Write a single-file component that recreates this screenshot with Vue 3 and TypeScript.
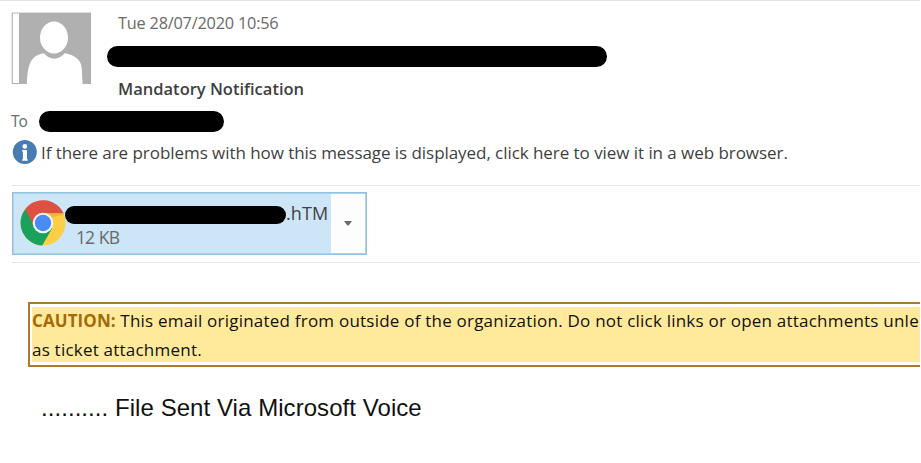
<script setup lang="ts">
const message = {
  sent: 'Tue 28/07/2020 10:56',
  subject: 'Mandatory Notification',
  notice: 'If there are problems with how this message is displayed, click here to view it in a web browser.',
  attachment: { extension: '.hTM', size: '12 KB' },
  heading: 'File Sent Via Microsoft Voice',
}
</script>

<template>
  <main class="mail">
    <header class="sender">
      <svg class="avatar" width="81" height="73" viewBox="0 0 81 73">
        <rect x="0.7" y="0.6" width="79.3" height="71.4" fill="#b0b0b0" />
        <rect x="1.8" y="1.5" width="6.2" height="69.5" fill="#fff" />
        <ellipse cx="43" cy="25.5" rx="14" ry="16" fill="#fff" />
        <path d="M15.8 73C16.3 64 16.5 58 18.8 52C21.3 45.5 25.8 42.5 32.8 41.3C38.8 48.5 47.8 48.5 53.8 41.3C60.8 42.5 65.8 45 69.3 50.5C71.6 55 70.8 64 71.8 73Z" fill="#fff" />
      </svg>
      <div class="details">
        <div class="sent">{{ message.sent }}</div>
        <div class="redacted from"></div>
        <div class="subject">{{ message.subject }}</div>
      </div>
    </header>

    <div class="recipient">
      <span class="to">To</span>
      <span class="redacted name"></span>
    </div>

    <div class="notice">
      <svg width="25" height="25" viewBox="0 0 25 25">
        <circle cx="12.8" cy="12" r="12" fill="#467cb3" />
        <circle cx="12.8" cy="6.4" r="2.4" fill="#fff" />
        <path d="M10.1 9.9h4.9v9.3h.8v1.6h-5.7v-1.6h.8v-7.6h-.8z" fill="#fff" />
      </svg>
      <span>{{ message.notice }}</span>
    </div>

    <section class="attachments">
      <div class="attachment">
        <div class="file">
          <svg class="chrome" width="46" height="46" viewBox="0 0 46 46">
            <circle cx="23" cy="23" r="22.5" fill="#ffce44" />
            <path d="M23 23L32.2 28.2L22.2 45.5A22.5 22.5 0 0 1 5.2 9.3Z" fill="#1aa15d" />
            <path d="M23 23L14.5 27L5.1 9.3A22.5 22.5 0 0 1 43.6 13.3H23Z" fill="#dd5044" />
            <path d="M23 13.3H43.6L43.9 14.8L32 17Z" fill="#dba92f" opacity=".55" />
            <circle cx="23" cy="23" r="10.3" fill="#f3f5f7" />
            <circle cx="23" cy="23" r="8.2" fill="#4a8af4" />
          </svg>
          <div class="file-info">
            <div class="file-name">
              <span class="redacted title"></span>
              <span>{{ message.attachment.extension }}</span>
            </div>
            <div class="file-size">{{ message.attachment.size }}</div>
          </div>
        </div>
        <div class="dropdown">
          <svg width="8" height="5" viewBox="0 0 8 5"><path d="M0 0H8L4.6 4.5H3.4Z" fill="#6c6c6c" /></svg>
        </div>
      </div>
    </section>

    <section class="caution">
      <div class="caution-text">
        <b>CAUTION:</b> This email originated from outside of the organization. Do not click links or open attachments unle<br>as ticket attachment.
      </div>
    </section>

    <h1 class="heading">.......... {{ message.heading }}</h1>
  </main>
</template>

<style>
body {
  background: #fff;
}
</style>

<style scoped>
.mail {
  box-sizing: border-box;
  width: 920px;
  height: 463px;
  overflow: hidden;
  border-top: 1px solid #e4e4e4;
  font-family: 'Open Sans', 'Noto Sans', sans-serif;
  color: #3f3f3f;
  white-space: nowrap;
}
.sender {
  display: flex;
  height: 107px;
  padding: 11px 0 0 11px;
  box-sizing: border-box;
}
.avatar {
  flex: none;
}
.details {
  padding-left: 15px;
}
.sent {
  margin: -1px 0 0 11px;
  font-size: 16.3px;
  line-height: 24px;
  letter-spacing: -0.2px;
  color: #6a6a6a;
}
.redacted {
  display: block;
  flex: none;
  background: #000;
  border-radius: 11px;
}
.from {
  width: 500px;
  height: 21px;
  margin-top: 11px;
}
.subject {
  margin: 10px 0 0 11px;
  font-size: 16.5px;
  font-weight: 600;
  line-height: 24px;
  letter-spacing: 0;
}
.recipient {
  display: flex;
  height: 28px;
  padding: 2px 0 0 11px;
  box-sizing: border-box;
}
.to {
  width: 27.5px;
  font-size: 15.5px;
  line-height: 22px;
  letter-spacing: -1px;
  color: #6a6a6a;
}
.name {
  width: 185px;
  height: 21px;
  margin-top: 1px;
}
.notice {
  display: flex;
  height: 49px;
  padding-left: 12px;
  font-size: 17px;
  line-height: 34px;
  letter-spacing: -0.055px;
}
.notice svg {
  flex: none;
  margin: 4px 4px 0 0;
}
.attachments {
  height: 78px;
  margin-left: 12px;
  padding-top: 6px;
  box-sizing: border-box;
  border-top: 1px solid #e4e4e4;
  border-bottom: 1px solid #e4e4e4;
}
.attachment {
  display: flex;
  box-sizing: border-box;
  width: 355px;
  height: 63px;
  border: 1px solid #92c0e0;
  box-shadow: inset 0 0 0 1px #aed3ed;
}
.file {
  display: flex;
  width: 318px;
  box-sizing: border-box;
  padding: 1px 0 1px 1px;
  background: #cde6f7;
  background-clip: content-box;
}
.chrome {
  flex: none;
  margin: 6px 0 0 6px;
}
.file-name {
  display: flex;
  height: 28px;
  margin-top: 5px;
  font-size: 18px;
  line-height: 28px;
  letter-spacing: 0.1px;
}
.title {
  width: 221px;
  height: 18px;
  margin-top: 7px;
  margin-left: -1px;
  border-radius: 9px;
}
.file-size {
  margin-left: 10px;
  font-size: 17.5px;
  line-height: 20px;
  letter-spacing: -0.9px;
  word-spacing: 1px;
  color: #6a6a6a;
}
.dropdown {
  display: flex;
  flex: 1;
  align-items: center;
  justify-content: center;
  margin: 1px 1px 1px 0;
  background: #fdfdfd;
}
.caution {
  box-sizing: border-box;
  height: 65px;
  margin: 39px 0 0 28px;
  padding: 3px 0 3px 2px;
  border: 2px solid #ac7a2a;
  border-right: 0;
}
.caution-text {
  height: 55px;
  overflow: hidden;
  background: #ffea9c;
  color: #111;
  font-size: 17px;
  line-height: 28.5px;
  letter-spacing: 0.22px;
}
.caution-text b {
  color: #a56a06;
  letter-spacing: 0.08px;
}
.heading {
  margin: 25px 0 0 41px;
  font: 24px/32px 'Liberation Sans', Arial, sans-serif;
  letter-spacing: 0.06px;
  color: #111;
}
</style>
